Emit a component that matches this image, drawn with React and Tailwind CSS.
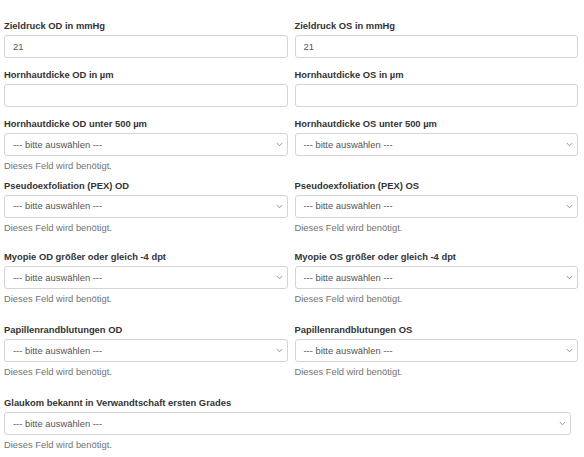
import React from "react";

const font = { fontFamily: '"Liberation Sans", Arial, sans-serif' };

function Chevron() {
  return (
    <svg width="7" height="5" viewBox="0 0 7 5" className="shrink-0">
      <path d="M0.8 1 L3.5 3.8 L6.2 1" fill="none" stroke="#8a8a8a" strokeWidth="0.9" />
    </svg>
  );
}

function Label({ children }) {
  return (
    <div className="text-[9.4px] font-bold leading-[13.4px] mb-[3px] text-[#333] whitespace-nowrap">
      {children}
    </div>
  );
}

function Input({ value }) {
  return (
    <div className="h-[23px] border border-[#d4d4d4] rounded-[3px] bg-white flex items-center px-[8px] text-[9.4px] text-[#555]">
      {value}
    </div>
  );
}

function Select() {
  return (
    <div className="h-[23px] border border-[#d4d4d4] rounded-[3px] bg-white flex items-center justify-between pl-[8px] pr-[4px] text-[9.4px] text-[#555]">
      <span>--- bitte auswählen ---</span>
      <Chevron />
    </div>
  );
}

function Err() {
  return (
    <div className="mt-[3px] text-[9.4px] leading-[13.4px] text-[#737373]">
      Dieses Feld wird benötigt.
    </div>
  );
}

function Field({ label, children, error }) {
  return (
    <div>
      <Label>{label}</Label>
      {children}
      {error && <Err />}
    </div>
  );
}

export default function App() {
  return (
    <div className="w-[584px] h-[457px] bg-white overflow-hidden pl-[4px] pr-[6px] pt-[19px]" style={font}>
      <div className="grid grid-cols-2 gap-x-[7px]">
        <Field label="Zieldruck OD in mmHg"><Input value="21" /></Field>
        <Field label="Zieldruck OS in mmHg"><Input value="21" /></Field>
      </div>
      <div className="grid grid-cols-2 gap-x-[7px] mt-[9.5px]">
        <Field label="Hornhautdicke OD in µm"><Input value="" /></Field>
        <Field label="Hornhautdicke OS in µm"><Input value="" /></Field>
      </div>
      <div className="grid grid-cols-2 gap-x-[7px] mt-[9.5px]">
        <Field label="Hornhautdicke OD unter 500 µm" error><Select /></Field>
        <Field label="Hornhautdicke OS unter 500 µm"><Select /></Field>
      </div>
      <div className="grid grid-cols-2 gap-x-[7px] mt-[6px]">
        <Field label="Pseudoexfoliation (PEX) OD" error><Select /></Field>
        <Field label="Pseudoexfoliation (PEX) OS" error><Select /></Field>
      </div>
      <div className="grid grid-cols-2 gap-x-[7px] mt-[15.5px]">
        <Field label="Myopie OD größer oder gleich -4 dpt" error><Select /></Field>
        <Field label="Myopie OS größer oder gleich -4 dpt" error><Select /></Field>
      </div>
      <div className="grid grid-cols-2 gap-x-[7px] mt-[17px]">
        <Field label="Papillenrandblutungen OD" error><Select /></Field>
        <Field label="Papillenrandblutungen OS" error><Select /></Field>
      </div>
      <div className="mt-[17.5px] w-[567px]">
        <Field label="Glaukom bekannt in Verwandtschaft ersten Grades" error><Select /></Field>
      </div>
    </div>
  );
}
